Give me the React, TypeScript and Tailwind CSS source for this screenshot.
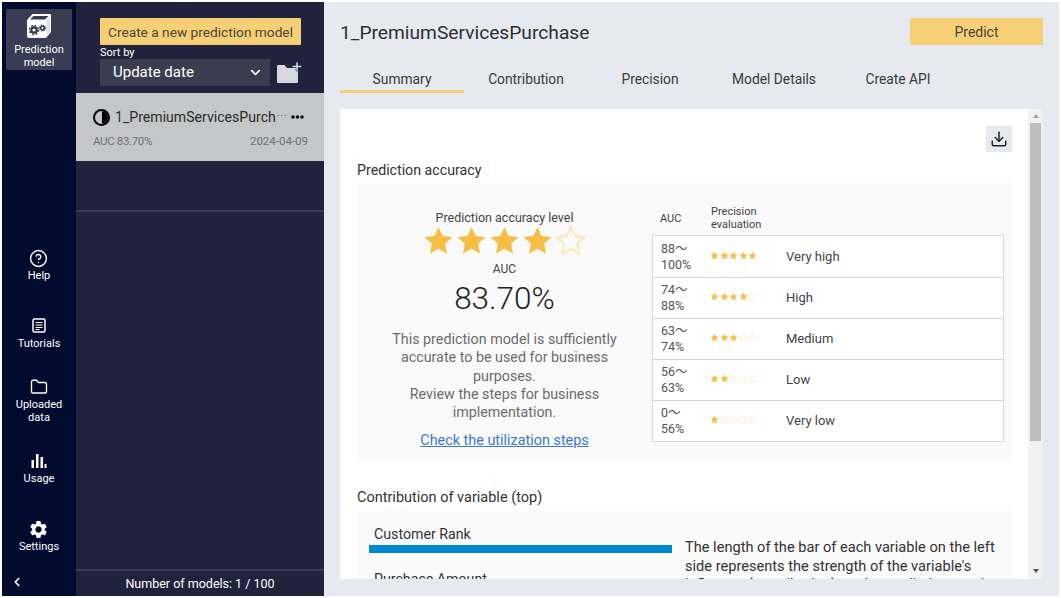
import { ChevronDown, ChevronLeft, CircleHelp, Download, Folder } from 'lucide-react'
import { MdSettings } from 'react-icons/md'

const FONT = "font-['Roboto','Noto_Sans_CJK_JP',sans-serif]"

const STAR_PATH = 'M12 1.5l3.2 7.1 7.6.8-5.7 5.2 1.6 7.6L12 18.4l-6.7 3.8 1.6-7.6-5.7-5.2 7.6-.8z'

function Star({ filled, size }: { filled: boolean; size: number }) {
  return (
    <svg width={size} height={size} viewBox="0 0 24 24" className="shrink-0">
      <path
        d={STAR_PATH}
        fill={filled ? '#f8bd45' : 'none'}
        stroke={filled ? '#f8bd45' : '#fbe6bd'}
        strokeWidth={filled ? 0 : 1.6}
      />
    </svg>
  )
}

function ModelIcon() {
  return (
    <svg width="26" height="26" viewBox="0 0 26 26">
      <path d="M1 7 6.500 1H24a1 1 0 0 1 1 1v17l-5 6H3a2 2 0 0 1-2-2z" fill="#fff" />
      <path d="M4 6.500 7.500 3H22.500l-3.500 3.500z" fill="#3a3d52" />
      <path d="M20.500 8 24 4v14.500l-3.500 4z" fill="#dfe0e6" />
      <circle cx="8" cy="17" r="2.700" fill="none" stroke="#34374c" strokeWidth="2.200" />
      <circle cx="8" cy="17" r="4.500" fill="none" stroke="#34374c" strokeWidth="1.500" strokeDasharray="1.800 1.730" />
      <circle cx="16.500" cy="15" r="1.800" fill="none" stroke="#34374c" strokeWidth="1.500" />
      <circle cx="16.500" cy="15" r="3" fill="none" stroke="#34374c" strokeWidth="1.100" strokeDasharray="1.300 1.060" />
    </svg>
  )
}

function TutorialIcon() {
  return (
    <svg width="14" height="15" viewBox="0 0 14 15" fill="none" stroke="#fff">
      <rect x="1" y="1" width="12" height="13" rx="1.500" strokeWidth="1.500" />
      <path d="M3.500 4.500h7M3.500 7h7M3.500 9.500h7M3.500 11.500h4" strokeWidth="1.200" />
    </svg>
  )
}

function UsageIcon() {
  return (
    <svg width="16" height="14" viewBox="0 0 16 14" fill="#fff">
      <rect x="0.500" y="6" width="2.500" height="8" />
      <rect x="5" y="0" width="2.500" height="14" />
      <rect x="9.500" y="3" width="2.500" height="11" />
      <rect x="13.500" y="10" width="2" height="4" />
    </svg>
  )
}

function NewFolderIcon() {
  return (
    <svg width="26" height="22" viewBox="0 0 26 22" fill="#d6d8de">
      <path d="M0 4a1 1 0 0 1 1-1h6.500l2.500 3h11v14a1 1 0 0 1-1 1H1a1 1 0 0 1-1-1z" />
      <path d="M19 0h2v3.500h3.500v2H21V9h-2V5.500h-3.500v-2H19z" stroke="#1f243c" strokeWidth="0.500" />
    </svg>
  )
}

function MoreIcon() {
  return (
    <svg width="13" height="4" viewBox="0 0 13 4" fill="#111" className="shrink-0">
      <circle cx="2" cy="2" r="1.800" />
      <circle cx="6.500" cy="2" r="1.800" />
      <circle cx="11" cy="2" r="1.800" />
    </svg>
  )
}

function NavItem({ icon, label, className }: { icon: React.ReactNode; label: React.ReactNode; className?: string }) {
  return (
    <div className={`flex flex-col items-center text-center text-[11px] leading-[13px] text-white ${className ?? ''}`}>
      {icon}
      {label}
    </div>
  )
}

const ratings = [
  { range: ['88～', '100%'], stars: 5, label: 'Very high' },
  { range: ['74～', '88%'], stars: 4, label: 'High' },
  { range: ['63～', '74%'], stars: 3, label: 'Medium' },
  { range: ['56～', '63%'], stars: 2, label: 'Low' },
  { range: ['0～', '56%'], stars: 1, label: 'Very low' },
]

const tabs = ['Summary', 'Contribution', 'Precision', 'Model Details', 'Create API']

export default function App() {
  return (
    <div className={`flex h-[598px] w-[1061px] overflow-hidden bg-white pb-[2px] pl-[2px] pr-[2px] pt-[2px] ${FONT}`}>
      {/* サイドバー */}
      <aside className="flex w-[74px] shrink-0 flex-col items-center bg-[#020a2e]">
        <div className="mt-[7px] flex h-[61px] w-[66px] flex-col items-center rounded-[1px] bg-[#393c52] pt-[4px] text-center text-[11px] leading-[13px] text-white">
          <ModelIcon />
          <span className="mt-[4px]">Prediction<br />model</span>
        </div>
        <NavItem className="mt-[179px]" icon={<CircleHelp size={19} strokeWidth={1.8} className="mb-[1px]" />} label="Help" />
        <NavItem className="mt-[36px]" icon={<TutorialIcon />} label={<span className="mt-[4px]">Tutorials</span>} />
        <NavItem className="mt-[28px]" icon={<Folder size={18} strokeWidth={1.8} className="mb-[2px]" />} label={<span>Uploaded<br />data</span>} />
        <NavItem className="mt-[30px]" icon={<UsageIcon />} label={<span className="mt-[4px]">Usage</span>} />
        <NavItem className="mt-[34px]" icon={<MdSettings size={21} />} label="Settings" />
        <div className="mt-[22px] flex w-full pl-[8px]">
          <ChevronLeft size={14} color="#fff" strokeWidth={3} />
        </div>
      </aside>

      {/* モデル一覧 */}
      <section className="flex w-[248px] shrink-0 flex-col bg-[#1f243c]">
        <div className="h-[91px] shrink-0 pl-[24px] pt-[16px]">
          <button className="block h-[27px] w-[201px] rounded-[1px] bg-[#f6cf76] pt-[1px] text-center text-[13.700px] leading-[26px] text-[#4a4636]">
            Create a new prediction model
          </button>
          <div className="mt-[1px] text-[11px] leading-[13px] text-white">Sort by</div>
          <div className="flex items-start">
            <div className="flex h-[27px] w-[170px] items-center justify-between bg-[#3a3d4e] pl-[13px] pr-[7px] text-[15px] text-white">
              Update date
              <ChevronDown size={15} strokeWidth={2.500} />
            </div>
            <span className="ml-[7px] mt-[3px] block"><NewFolderIcon /></span>
          </div>
        </div>
        <div className="h-[68px] shrink-0 bg-[#c4c6ca] pl-[17px] pr-[20px] pt-[14px]">
          <div className="flex items-center text-[#2b2b2b]">
            <span className="flex h-[17px] w-[17px] shrink-0 overflow-hidden rounded-full border-[2px] border-black">
              <span className="w-1/2" />
              <span className="w-1/2 bg-black" />
            </span>
            <span className="ml-[5px] whitespace-nowrap text-[14.100px] leading-[20px]">1_PremiumServicesPurch</span>
            <span className="ml-[1px] text-[11px] leading-[20px] tracking-[0.5px] text-[#555]">···</span>
            <span className="ml-auto block"><MoreIcon /></span>
          </div>
          <div className="mr-[-4px] mt-[6px] flex justify-between text-[11.500px] text-[#6f7178]">
            <span className="tracking-[-0.35px]">AUC 83.70%</span>
            <span>2024-04-09</span>
          </div>
        </div>
        <div className="h-[49px] shrink-0" />
        <div className="min-h-0 flex-1 border-t-2 border-[#3a3d4e]" />
        <div className="flex h-[27px] shrink-0 items-center justify-center border-t-2 border-[#3a3d4e] pt-[2px] text-[12.500px] text-white">
          Number of models: 1 / 100
        </div>
      </section>

      {/* メイン */}
      <main className="flex min-w-0 flex-1 flex-col bg-[#e6e9ef] pl-[16px] pr-[16px]">
        <header className="flex h-[43px] w-[703px] shrink-0 items-end justify-between">
          <h1 className="mb-[-3px] text-[19.200px] leading-[30px] text-[#2f2f2f]">1_PremiumServicesPurchase</h1>
          <button className="h-[27px] w-[133px] rounded-[1px] bg-[#f6cf76] pt-[1px] text-[14px] text-[#4a4636]">Predict</button>
        </header>
        <nav className="mt-[17px] flex h-[31px] shrink-0 text-[13.800px] text-[#3a3a3a]">
          {tabs.map((tab, i) => (
            <div
              key={tab}
              className={`flex h-[31px] w-[124px] items-start justify-center border-b-[3px] pt-[6px] leading-[22px] ${i === 0 ? 'border-[#f6cf76]' : 'border-transparent'}`}
            >
              {tab}
            </div>
          ))}
        </nav>

        <div className="mt-[16px] flex h-[470px] w-[703px] shrink-0 overflow-hidden bg-white">
          <div className="min-w-0 flex-1 overflow-hidden pl-[17px] pr-[16px] pt-[17px]">
            <div className="flex justify-end">
              <button className="flex h-[26px] w-[26px] items-center justify-center rounded-[1px] bg-[#e6e9ef]">
                <Download size={18} strokeWidth={2} color="#222" />
              </button>
            </div>
            <h2 className="mt-[8px] text-[14.200px] leading-[20px] text-[#333]">Prediction accuracy</h2>
            <div className="mt-[2px] flex h-[279px] bg-[#fafafa]">
              <div className="flex w-[295px] flex-col items-center pt-[27px] text-center">
                <div className="text-[12.500px] leading-[18px] text-[#444]">Prediction accuracy level</div>
                <div className="mt-[-2px] flex gap-[2px]">
                  {[1, 2, 3, 4, 5].map((n) => (
                    <Star key={n} filled={n <= 4} size={31} />
                  ))}
                </div>
                <div className="mt-[5px] text-[12px] leading-[16px] text-[#444]">AUC</div>
                <div className="mt-[3px] text-[31.500px] font-light leading-[38px] text-[#222]">83.70%</div>
                <p className="mt-[12px] w-[232px] text-[14.300px] leading-[18.250px] text-[#6b6b6b]">
                  This prediction model is sufficiently accurate to be used for business purposes.
                  <br />
                  Review the steps for business implementation.
                </p>
                <a className="mt-[11px] text-[14.400px] leading-[18px] text-[#3a78d0] underline">Check the utilization steps</a>
              </div>
              <div className="pt-[20px]">
                <div className="mb-[1px] flex h-[32px] items-center text-[11px] leading-[13px] text-[#444]">
                  <span className="w-[59px] pl-[8px]">AUC</span>
                  <span>Precision<br />evaluation</span>
                </div>
                <div className="w-[352px] border border-[#d5d7db] bg-white">
                  {ratings.map((row, i) => (
                    <div key={row.label} className={`flex h-[41px] items-center ${i > 0 ? 'border-t border-[#d5d7db]' : ''}`}>
                      <span className="w-[57px] pl-[8px] text-[12.500px] leading-[16px] text-[#555]">
                        {row.range[0]}<br />{row.range[1]}
                      </span>
                      <span className="mb-[3px] flex w-[76px] gap-[0.600px]">
                        {[1, 2, 3, 4, 5].map((n) => (
                          <Star key={n} filled={n <= row.stars} size={9} />
                        ))}
                      </span>
                      <span className="text-[13px] text-[#444]">{row.label}</span>
                    </div>
                  ))}
                </div>
              </div>
            </div>
            <h2 className="mt-[27px] text-[14.500px] leading-[20px] text-[#333]">Contribution of variable (top)</h2>
            <div className="mt-[2px] flex bg-[#fafafa] pl-[12px] pt-[14px]">
              <div className="w-[303px] shrink-0">
                <div className="pl-[5px] text-[14.200px] leading-[20px] text-[#333]">Customer Rank</div>
                <div className="mt-[1px] h-[8px] bg-[#0088d6]" />
                <div className="mt-[16px] pl-[5px] text-[14.200px] leading-[20px] text-[#333]">Purchase Amount</div>
              </div>
              <p className="ml-[13px] mt-[14px] w-[315px] text-[14.600px] leading-[18.500px] text-[#333]">
                The length of the bar of each variable on the left side represents the strength of the variable's influence (contribution) on the prediction result.
              </p>
            </div>
          </div>

          {/* スクロールバー */}
          <div className="flex w-[15px] shrink-0 flex-col items-center bg-[#f1f1f1]">
            <div className="mt-[5px] h-0 w-0 border-x-[3.500px] border-b-[4px] border-x-transparent border-b-[#a3a3a3]" />
            <div className="mt-[5px] h-[318px] w-[11px] bg-[#bdbdbd]" />
            <div className="mt-[128px] h-0 w-0 border-x-[3.500px] border-t-[4px] border-x-transparent border-t-[#505050]" />
          </div>
        </div>
      </main>
    </div>
  )
}
